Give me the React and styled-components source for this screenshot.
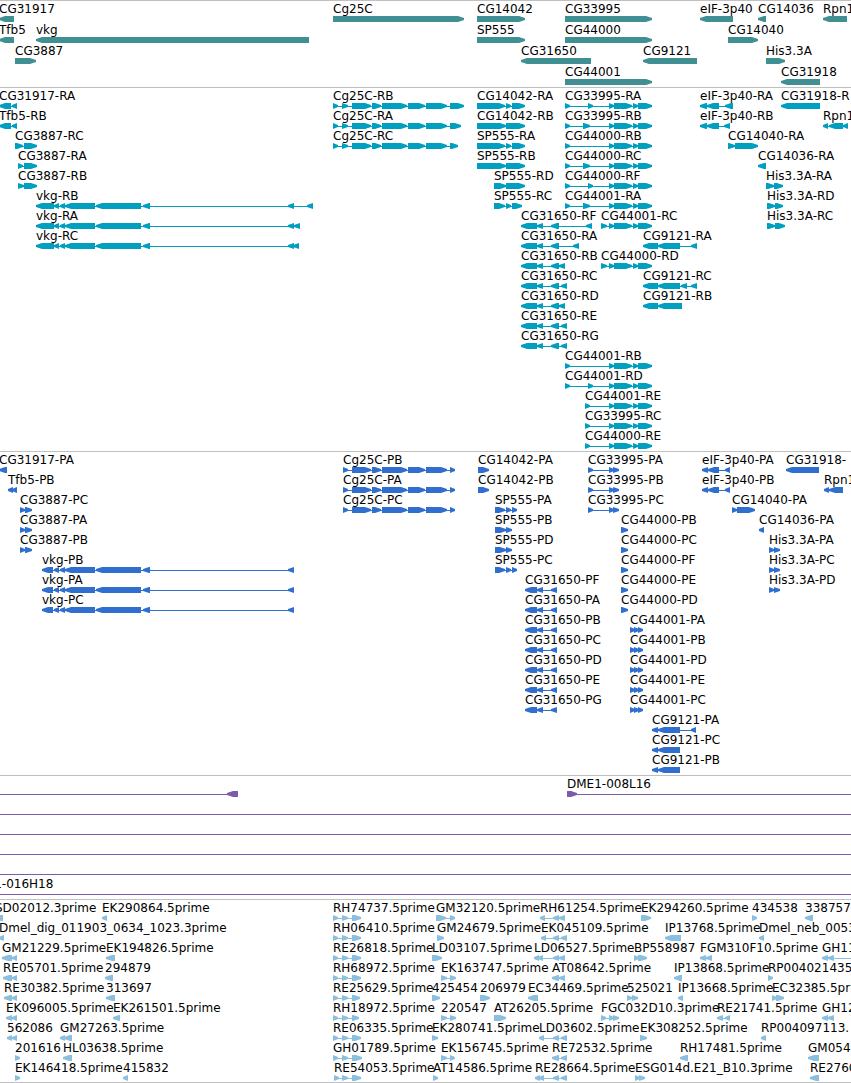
import React from "react";
import styled, { createGlobalStyle } from "styled-components";

const GlobalStyle = createGlobalStyle`
  body {
    margin: 0;
    background-color: white;
  }
`;
const Browser = styled.main`
  display: flex;
  flex-direction: column;
  overflow: hidden;
  border-bottom: 1px solid #c0c0c0;
  color: black;
  font-family: "DejaVu Sans", sans-serif;
  font-size: 12px;
  line-height: 17px;
`;
const Track = styled.section`
  display: flex;
  flex-direction: column;
  border-top: 1px solid #c0c0c0;
  padding-bottom: ${(props) => (props.$tight ? 2 : 3)}px;
  color: ${(props) => props.$color};
`;
const Row = styled.div`
  position: relative;
  height: ${(props) => props.$height}px;
`;
/* features sit at their own coordinate on the sequence */
const FeatureBox = styled.div`
  position: absolute;
  top: 0;
  display: flex;
  flex-direction: column;
  white-space: nowrap;
`;
const Label = styled.span`
  height: 15px;
  color: black;
`;
const Glyph = styled.svg`
  display: block;
  fill: currentColor;
`;

const HEAD = 6;
const FAR = 4000;

// name, strand, then start/end of every block
const f = (name, strand, ...blocks) => ({ name, strand, blocks });

const genes = [
  [
    f("CG31917", "-", -1, 14),
    f("Cg25C", "+", 333, 464),
    f("CG14042", "+", 477, 525),
    f("CG33995", "+", 565, 652),
    f("eIF-3p40", "-", 700, 733),
    f("CG14036", "-", 758, 766),
    f("Rpn1", "-", 823, 847),
  ],
  [
    f("Tfb5", "-", -1, 14),
    f("vkg", "-", 36, 309),
    f("SP555", "+", 477, 525),
    f("CG44000", "+", 565, 652),
    f("CG14040", "+", 728, 758),
  ],
  [
    f("CG3887", "+", 15, 36),
    f("CG31650", "-", 521, 591),
    f("CG9121", "-", 643, 697),
    f("His3.3A", "+", 766, 785),
  ],
  [f("CG44001", "+", 565, 652), f("CG31918", "-", 781, 820)],
];

// blocks that several isoforms have in common
const cgMid = [352, 371, 372, 381, 382, 407, 408, 425, 426, 447];
const cgStart = [333, 338, 342, 348, ...cgMid];
const tail = [609, 614, 614, 632, 633, 638, 638, 652];
const vkgMid = [54, 59, 60, 65, 65, 95, 96, 141, 143, 150, 288, 294];
const c31650 = [521, 537, 537, 543, 551, 559];

const transcripts = [
  [
    f("CG31917-RA", "-", -1, 11, 12, 17),
    f("Cg25C-RB", "+", ...cgStart, 450, 464),
    f("CG14042-RA", "+", 477, 505, 506, 511, 512, 525),
    f("CG33995-RA", "+", 565, 570, 588, 593, ...tail),
    f("eIF-3p40-RA", "-", 700, 707, 707, 719, 725, 733),
    f("CG31918-R", "-", 781, 820),
  ],
  [
    f("Tfb5-RB", "-", -1, 11, 12, 17),
    f("Cg25C-RA", "+", ...cgStart, 450, 461),
    f("CG14042-RB", "+", 477, 506, 506, 525),
    f("CG33995-RB", "+", 565, 570, 583, 590, ...tail),
    f("eIF-3p40-RB", "-", 700, 707, 707, 719, 724, 730),
    f("Rpn1", "-", 823, 828, 829, 843, 843, 848),
  ],
  [
    f("CG3887-RC", "+", 15, 23, 24, 37),
    f("Cg25C-RC", "+", ...cgStart, 450, 458),
    f("SP555-RA", "+", 477, 505, 506, 511, 512, 525),
    f("CG44000-RB", "+", 565, 570, ...tail),
    f("CG14040-RA", "+", 728, 735, 735, 758),
  ],
  [
    f("CG3887-RA", "+", 18, 23, 24, 37),
    f("SP555-RB", "+", 477, 506, 506, 525),
    f("CG44000-RC", "+", 565, 570, 583, 590, ...tail),
    f("CG14036-RA", "-", 758, 766),
  ],
  [
    f("CG3887-RB", "+", 18, 24, 24, 37),
    f("SP555-RD", "+", 494, 506, 506, 525),
    f("CG44000-RF", "+", 565, 570, 588, 593, ...tail),
    f("His3.3A-RA", "+", 766, 774, 774, 783),
  ],
  [
    f("vkg-RB", "-", 36, 54, ...vkgMid, 307, 313),
    f("SP555-RC", "+", 494, 505, 506, 511, 512, 522),
    f("CG44001-RA", "+", 565, 570, 583, 590, ...tail),
    f("His3.3A-RD", "+", 767, 775, 775, 783),
  ],
  [
    f("vkg-RA", "-", 36, 54, ...vkgMid, 294, 300),
    f("CG31650-RF", "-", ...c31650, 586, 592),
    f("CG44001-RC", "+", 601, 607, ...tail),
    f("His3.3A-RC", "+", 767, 775, 775, 785),
  ],
  [
    f("vkg-RC", "-", 36, 54, ...vkgMid, 293, 299),
    f("CG31650-RA", "-", ...c31650, 573, 579),
    f("CG9121-RA", "-", 643, 658, 658, 680, 691, 697),
  ],
  [
    f("CG31650-RB", "-", ...c31650, 559, 565),
    f("CG44000-RD", "+", 601, 607, ...tail),
  ],
  [
    f("CG31650-RC", "-", ...c31650, 561, 567),
    f("CG9121-RC", "-", 643, 658, 658, 680, 681, 687, 691, 697),
  ],
  [
    f("CG31650-RD", "-", ...c31650, 559, 565),
    f("CG9121-RB", "-", 643, 658, 658, 682),
  ],
  [f("CG31650-RE", "-", ...c31650, 561, 567)],
  [f("CG31650-RG", "-", ...c31650, 561, 567)],
  [f("CG44001-RB", "+", 565, 570, ...tail)],
  [f("CG44001-RD", "+", 565, 570, 588, 593, ...tail)],
  [f("CG44001-RE", "+", 585, 590, ...tail)],
  [f("CG33995-RC", "+", 585, 590, ...tail)],
  [f("CG44000-RE", "+", 585, 590, ...tail)],
];

const cgProtein = [343, 348, ...cgMid, 450, 455];
const p33995 = [588, 593, 609, 614, 613, 619];
const pEif = [702, 708, 708, 719, 725, 730];
const pSpLong = [495, 505, 506, 511, 512, 517];
const pSpShort = [495, 506, 506, 512];
const p3887 = [20, 25, 25, 32];
const pHis = [769, 774, 774, 780];
const p31650 = [525, 537, 537, 543, 551, 557];
const p44001 = [630, 635, 634, 639, 638, 643];

const proteins = [
  [
    f("CG31917-PA", "-", -1, 7),
    f("Cg25C-PB", "+", ...cgProtein),
    f("CG14042-PA", "+", 478, 489),
    f("CG33995-PA", "+", ...p33995),
    f("eIF-3p40-PA", "-", ...pEif),
    f("CG31918-", "-", 786, 819),
  ],
  [
    f("Tfb5-PB", "-", 8, 13, 12, 17),
    f("Cg25C-PA", "+", ...cgProtein),
    f("CG14042-PB", "+", 478, 489),
    f("CG33995-PB", "+", ...p33995),
    f("eIF-3p40-PB", "-", ...pEif),
    f("Rpn1", "-", 824, 829, 829, 843),
  ],
  [
    f("CG3887-PC", "+", ...p3887),
    f("Cg25C-PC", "+", ...cgProtein),
    f("SP555-PA", "+", ...pSpLong),
    f("CG33995-PC", "+", ...p33995),
    f("CG14040-PA", "+", 732, 737, 737, 755),
  ],
  [
    f("CG3887-PA", "+", ...p3887),
    f("SP555-PB", "+", ...pSpShort),
    f("CG44000-PB", "+", 621, 628),
    f("CG14036-PA", "-", 759, 764),
  ],
  [
    f("CG3887-PB", "+", ...p3887),
    f("SP555-PD", "+", ...pSpShort),
    f("CG44000-PC", "+", 621, 628),
    f("His3.3A-PA", "+", ...pHis),
  ],
  [
    f("vkg-PB", "-", 42, 53, ...vkgMid),
    f("SP555-PC", "+", ...pSpLong),
    f("CG44000-PF", "+", 621, 628),
    f("His3.3A-PC", "+", ...pHis),
  ],
  [
    f("vkg-PA", "-", 42, 53, ...vkgMid),
    f("CG31650-PF", "-", ...p31650),
    f("CG44000-PE", "+", 621, 628),
    f("His3.3A-PD", "+", ...pHis),
  ],
  [
    f("vkg-PC", "-", 42, 53, ...vkgMid),
    f("CG31650-PA", "-", ...p31650),
    f("CG44000-PD", "+", 621, 628),
  ],
  [f("CG31650-PB", "-", ...p31650), f("CG44001-PA", "+", ...p44001)],
  [f("CG31650-PC", "-", ...p31650), f("CG44001-PB", "+", ...p44001)],
  [f("CG31650-PD", "-", ...p31650), f("CG44001-PD", "+", ...p44001)],
  [f("CG31650-PE", "-", ...p31650), f("CG44001-PE", "+", ...p44001)],
  [f("CG31650-PG", "-", ...p31650), f("CG44001-PC", "+", ...p44001)],
  [f("CG9121-PA", "-", 652, 658, 658, 680, 691, 696)],
  [f("CG9121-PC", "-", 652, 658, 658, 680)],
  [f("CG9121-PB", "-", 652, 658, 658, 680)],
];

// clones run past both ends of the view
const clones = [
  [
    f("", "-", -40, -30, 227, 238),
    f("DME1-008L16", "+", 567, 577, FAR, FAR + 10),
  ],
  [f("", "+", -40, -30, FAR, FAR + 10)],
  [f("", "+", -40, -30, FAR, FAR + 10)],
  [f("", "+", -40, -30, FAR, FAR + 10)],
  [f("", "+", -40, -30, FAR, FAR + 10)],
  [f("DME1-016H18", "+", -33, -23, FAR, FAR + 10)],
];

const rh = [333, 338, 342, 348, 352];

const ests = [
  [
    f("SD02012.3prime", "-", -5, 3),
    f("EK290864.5prime", "-", 102, 107),
    f("RH74737.5prime", "+", ...rh, 361),
    f("GM32120.5prime", "+", 436, 446, 450, 455),
    f("RH61254.5prime", "-", 540, 545, 553, 559, 559, 565),
    f("EK294260.5prime", "+", 641, 651),
    f("434538", "+", 752, 757),
    f("338757", "-", 805, 813),
  ],
  [
    f("Dmel_dig_011903_0634_1023.3prime", "-", -1, 4),
    f("RH06410.5prime", "+", ...rh, 361),
    f("GM24679.5prime", "+", 437, 444),
    f("EK045109.5prime", "-", 541, 546, 553, 559, 561, 567),
    f("IP13768.5prime", "-", 665, 681),
    f("Dmel_neb_0053", "-", 759, 764),
  ],
  [
    f("GM21229.5prime", "-", 2, 12, 12, 17),
    f("EK194826.5prime", "-", 106, 115),
    f("RE26818.5prime", "+", ...rh, 361),
    f("LD03107.5prime", "+", 432, 442),
    f("LD06527.5prime", "-", 534, 539, 538, 543, 553, 559, 559, 565),
    f("BP558987", "+", 634, 639, 638, 647),
    f("FGM310F10.5prime", "-", 700, 706, 706, 712),
    f("GH11", "-", 822, 828, 828, 834, 860, 866),
  ],
  [
    f("RE05701.5prime", "-", 3, 12, 12, 17),
    f("294879", "-", 105, 113),
    f("RH68972.5prime", "+", ...rh, 361),
    f("EK163747.5prime", "+", 441, 447, 450, 456),
    f("AT08642.5prime", "-", 552, 559, 559, 565),
    f("IP13868.5prime", "-", 674, 682),
    f("RP004021435", "+", 768, 773),
  ],
  [
    f("RE30382.5prime", "-", 4, 12, 12, 17),
    f("313697", "-", 106, 115),
    f("RE25629.5prime", "+", ...rh, 360),
    f("425454", "+", 432, 440),
    f("206979", "+", 480, 490),
    f("EC34469.5prime", "-", 528, 538),
    f("525021", "+", 627, 632, 632, 638),
    f("IP13668.5prime", "-", 678, 683),
    f("EC32385.5prime", "+", 772, 777, 776, 784),
  ],
  [
    f("EK096005.5prime", "-", 6, 12, 12, 17),
    f("EK261501.5prime", "-", 113, 120),
    f("RH18972.5prime", "+", ...rh, 359),
    f("220547", "+", 441, 447, 450, 456),
    f("AT26205.5prime", "+", 494, 506),
    f("FGC032D10.3prime", "+", 601, 606, 609, 614, 613, 619),
    f("RE21741.5prime", "-", 717, 723, 725, 730),
    f("GH12", "-", 822, 828, 828, 834),
  ],
  [
    f("562086", "-", 7, 12, 12, 17),
    f("GM27263.5prime", "-", 60, 65, 64, 72),
    f("RE06335.5prime", "+", ...rh, 361),
    f("EK280741.5prime", "+", 432, 438),
    f("LD03602.5prime", "-", 539, 544, 553, 559, 561, 567),
    f("EK308252.5prime", "+", 640, 647),
    f("RP004097113.", "-", 761, 766),
  ],
  [
    f("201616", "+", 15, 20),
    f("HL03638.5prime", "-", 63, 72),
    f("GH01789.5prime", "+", ...rh, 362),
    f("EK156745.5prime", "+", 441, 447, 450, 455),
    f("RE72532.5prime", "-", 552, 559, 561, 567),
    f("RH17481.5prime", "-", 680, 688),
    f("GM054", "-", 808, 819),
  ],
  [
    f("EK146418.5prime", "+", 15, 20),
    f("415832", "-", 123, 128),
    f("RE54053.5prime", "+", 334, 339, 342, 348, 352, 361),
    f("AT14586.5prime", "+", 433, 438),
    f("RE28664.5prime", "-", 535, 540, 539, 544, 553, 559, 561, 567),
    f("ESG014d.E21_B10.3prime", "+", 635, 640, 639, 645),
    f("RE2760", "-", 810, 819),
  ],
];

const tracks = [
  { id: "Genes", color: "#408f93", rows: genes, rowHeight: 21, tight: true },
  { id: "Transcripts", color: "#009fc0", rows: transcripts, rowHeight: 20 },
  { id: "Proteins", color: "#316fce", rows: proteins, rowHeight: 20 },
  { id: "Clones", color: "#7b5bab", rows: clones, rowHeight: 20 },
  { id: "ESTs", color: "#8bbfdf", rows: ests, rowHeight: 20, tight: true },
];

// a block is a bar that narrows to a point in the strand's direction
const blockPath = (start, end, strand) => {
  const head = Math.min(HEAD, end - start);
  return strand === "+"
    ? `M${start} 0H${end - head}L${end} 2V4L${end - head} 6H${start}Z`
    : `M${end} 0H${start + head}L${start} 2V4L${start + head} 6H${end}Z`;
};

function Feature({ name, strand, blocks }) {
  const start = blocks[0];
  const end = blocks[blocks.length - 1];
  const paths = [];
  for (let i = 0; i < blocks.length; i += 2) {
    paths.push(blockPath(blocks[i] - start, blocks[i + 1] - start, strand));
  }
  return (
    <FeatureBox style={{ left: start }}>
      <Label>{name}</Label>
      <Glyph width={end - start} height="6" aria-hidden="true">
        {blocks.length > 2 && (
          <rect x="1" y="3" width={end - start - 2} height="1" />
        )}
        <path d={paths.join("")} />
      </Glyph>
    </FeatureBox>
  );
}

function App() {
  return (
    <>
      <GlobalStyle />
      <Browser>
        {tracks.map((track) => (
          <Track
            key={track.id}
            aria-label={track.id}
            $color={track.color}
            $tight={track.tight}
          >
            {track.rows.map((row, index) => (
              <Row key={index} $height={track.rowHeight}>
                {row.map((feature, i) => (
                  <Feature key={i} {...feature} />
                ))}
              </Row>
            ))}
          </Track>
        ))}
      </Browser>
    </>
  );
}

export default App;
